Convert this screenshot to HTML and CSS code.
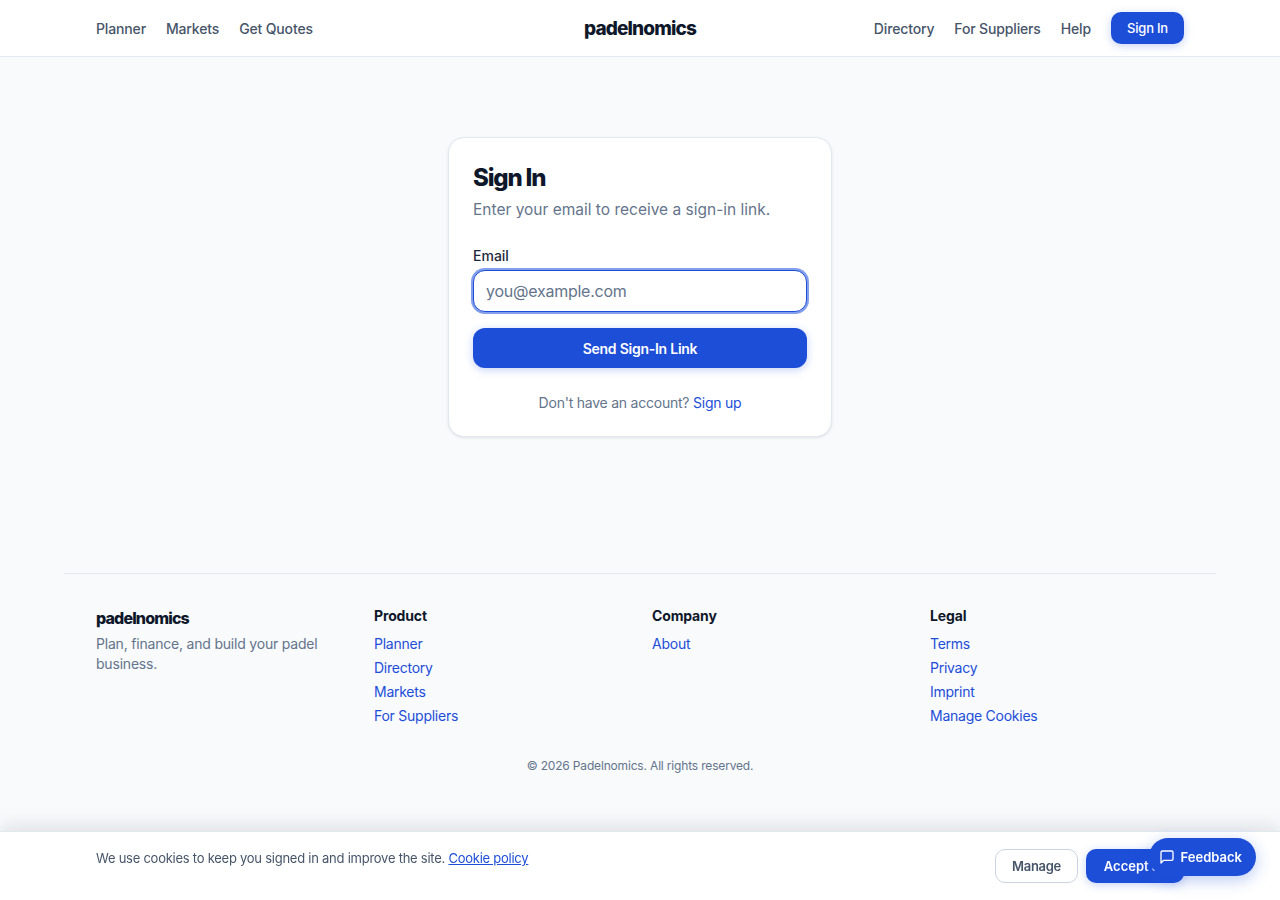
FILE: index.html
```html
<!DOCTYPE html>
<html lang="en">
<head>
  <meta charset="UTF-8">
  <meta name="viewport" content="width=device-width, initial-scale=1.0">
  <title>Sign In - Padelnomics</title>
  <link rel="stylesheet" href="styles.css">
</head>
<body>

  <!-- Navbar -->
  <nav class="nav">
    <div class="nav-side">
      <a href="#">Planner</a>
      <a href="#">Markets</a>
      <a href="#">Get Quotes</a>
    </div>
    <a href="#" class="nav-logo">padelnomics</a>
    <div class="nav-side nav-right">
      <a href="#">Directory</a>
      <a href="#">For Suppliers</a>
      <a href="#">Help</a>
      <a href="#" class="btn btn-small">Sign In</a>
    </div>
  </nav>

  <!-- Sign in card -->
  <main class="main">
    <div class="card">
      <h1>Sign In</h1>
      <p class="card-sub">Enter your email to receive a sign-in link.</p>
      <form class="form">
        <label for="email">Email</label>
        <input type="email" id="email" placeholder="you@example.com">
        <button type="button" class="btn btn-wide">Send Sign-In Link</button>
      </form>
      <p class="card-foot">Don't have an account? <a href="#">Sign up</a></p>
    </div>
  </main>

  <!-- Footer -->
  <footer class="footer">
    <div class="footer-grid">
      <div>
        <div class="footer-logo">padelnomics</div>
        <p class="footer-about">Plan, finance, and build your padel business.</p>
      </div>
      <div>
        <h3>Product</h3>
        <ul>
          <li><a href="#">Planner</a></li>
          <li><a href="#">Directory</a></li>
          <li><a href="#">Markets</a></li>
          <li><a href="#">For Suppliers</a></li>
        </ul>
      </div>
      <div>
        <h3>Company</h3>
        <ul>
          <li><a href="#">About</a></li>
        </ul>
      </div>
      <div>
        <h3>Legal</h3>
        <ul>
          <li><a href="#">Terms</a></li>
          <li><a href="#">Privacy</a></li>
          <li><a href="#">Imprint</a></li>
          <li><a href="#">Manage Cookies</a></li>
        </ul>
      </div>
    </div>
    <p class="copyright">&copy; 2026 Padelnomics. All rights reserved.</p>
  </footer>

  <!-- Cookie bar -->
  <div class="cookie-bar">
    <p>We use cookies to keep you signed in and improve the site. <a href="#">Cookie policy</a></p>
    <div class="cookie-actions">
      <button type="button" class="btn-outline">Manage</button>
      <button type="button" class="btn btn-accept">Accept all</button>
    </div>
  </div>

  <button type="button" class="feedback">
    <svg width="16" height="16" viewBox="0 0 24 24" fill="none" stroke="currentColor" stroke-width="2" stroke-linecap="round" stroke-linejoin="round"><path d="M21 15a2 2 0 0 1-2 2H7l-4 4V5a2 2 0 0 1 2-2h14a2 2 0 0 1 2 2z"/></svg>
    Feedback
  </button>

</body>
</html>
```

FILE: styles.css
```css
* {
  margin: 0;
  padding: 0;
  box-sizing: border-box;
}
body {
  font-family: Inter, "Liberation Sans", sans-serif;
  background-color: #F8FAFC;
  color: #0F172A;
  font-size: 15px;
  min-height: 900px;
  display: flex;
  flex-direction: column;
}
a {
  text-decoration: none;
  color: #1D4ED8;
}

/* Navbar */
.nav {
  height: 57px;
  background-color: white;
  border-bottom: 1px solid #E2E8F0;
  padding: 0 96px;
  display: grid;
  grid-template-columns: 1fr auto 1fr;
  align-items: center;
}
.nav-side {
  display: flex;
  align-items: center;
  gap: 20px;
}
.nav-side a {
  color: #475569;
  font-size: 14px;
  font-weight: 500;
  letter-spacing: -0.15px;
}
.nav-right {
  justify-content: flex-end;
}
.nav-logo {
  color: #0F172A;
  font-size: 19px;
  font-weight: 800;
  letter-spacing: -0.85px;
}
.btn {
  background-color: #1D4ED8;
  color: white;
  border: none;
  font-family: inherit;
  font-weight: 600;
  box-shadow: 0 2px 8px rgba(29, 78, 216, 0.25);
}
.nav-side .btn-small {
  color: white;
  width: 73px;
  height: 32px;
  border-radius: 10px;
  font-size: 13px;
  letter-spacing: -0.2px;
  display: flex;
  align-items: center;
  justify-content: center;
}

/* Card */
.main {
  height: 516px;
  padding-top: 80px;
}
.card {
  width: 384px;
  height: 300px;
  margin: 0 auto;
  padding: 24px;
  background-color: white;
  border: 1px solid #E2E8F0;
  border-radius: 16px;
  box-shadow: 0 1px 3px rgba(15, 23, 42, 0.1);
}
.card h1 {
  font-size: 24px;
  line-height: 32px;
  font-weight: 800;
  letter-spacing: -1.2px;
}
.card-sub {
  margin-top: 4px;
  color: #64748B;
  font-size: 15.5px;
  line-height: 24px;
}
.form {
  margin-top: 24px;
  display: flex;
  flex-direction: column;
}
.form label {
  font-size: 14px;
  font-weight: 500;
  line-height: 20px;
  margin-bottom: 4px;
  color: #1E293B;
}
.form input {
  height: 42px;
  padding: 0 12px;
  border: 1px solid #1D4ED8;
  border-radius: 12px;
  outline: none;
  box-shadow: 0 0 0 2px rgba(29, 78, 216, 0.55);
  font-family: inherit;
  font-size: 16px;
  letter-spacing: -0.25px;
  color: #0F172A;
}
.form input::placeholder {
  color: #64748B;
}
.btn-wide {
  margin-top: 16px;
  height: 40px;
  border-radius: 12px;
  font-size: 14px;
  letter-spacing: -0.25px;
}
.card-foot {
  margin-top: 25px;
  text-align: center;
  color: #64748B;
  font-size: 14px;
  line-height: 20px;
  letter-spacing: -0.23px;
}

/* Footer */
.footer {
  width: 1152px;
  margin: 0 auto;
  padding: 32px 32px 0;
  border-top: 1px solid #E2E8F0;
}
.footer-grid {
  display: grid;
  grid-template-columns: repeat(4, 1fr);
  gap: 24px;
}
.footer-logo {
  font-size: 16px;
  line-height: 24px;
  font-weight: 800;
  letter-spacing: -0.85px;
}
.footer-about {
  margin-top: 4px;
  color: #64748B;
  font-size: 14px;
  line-height: 20px;
  letter-spacing: -0.2px;
}
.footer h3 {
  font-size: 14px;
  line-height: 20px;
  font-weight: 700;
  letter-spacing: -0.15px;
  margin-bottom: 8px;
}
.footer ul {
  list-style-type: none;
  display: flex;
  flex-direction: column;
  gap: 4px;
}
.footer li {
  font-size: 14px;
  line-height: 20px;
  letter-spacing: -0.25px;
}
.copyright {
  margin-top: 32px;
  text-align: center;
  color: #64748B;
  font-size: 12px;
  line-height: 16px;
  letter-spacing: -0.17px;
}

/* Cookie bar */
.cookie-bar {
  position: fixed;
  left: 0;
  right: 0;
  bottom: 0;
  height: 69px;
  padding: 16px 96px 0;
  background-color: white;
  border-top: 1px solid #E2E8F0;
  box-shadow: 0 -4px 20px rgba(15, 23, 42, 0.12);
  display: flex;
  justify-content: space-between;
  align-items: flex-start;
}
.cookie-bar p {
  color: #475569;
  font-size: 13px;
  line-height: 20px;
  letter-spacing: -0.25px;
}
.cookie-bar a {
  text-decoration: underline;
}
.cookie-actions {
  display: flex;
  gap: 8px;
  margin-top: 1px;
}
.btn-outline, .btn-accept {
  height: 34px;
  border-radius: 10px;
  font-family: inherit;
  font-size: 13px;
  font-weight: 600;
}
.btn-outline {
  width: 83px;
  background-color: white;
  color: #475569;
  border: 1px solid #CBD5E1;
  letter-spacing: -0.3px;
}
.btn-accept {
  width: 98px;
}
.feedback {
  position: fixed;
  right: 24px;
  bottom: 24px;
  height: 38px;
  padding: 0 14px 0 10px;
  display: flex;
  align-items: center;
  gap: 6px;
  background-color: #1D4ED8;
  color: white;
  border: none;
  border-radius: 19px;
  font-family: inherit;
  font-size: 13px;
  font-weight: 600;
  box-shadow: 0 4px 16px rgba(29, 78, 216, 0.3);
}
```
